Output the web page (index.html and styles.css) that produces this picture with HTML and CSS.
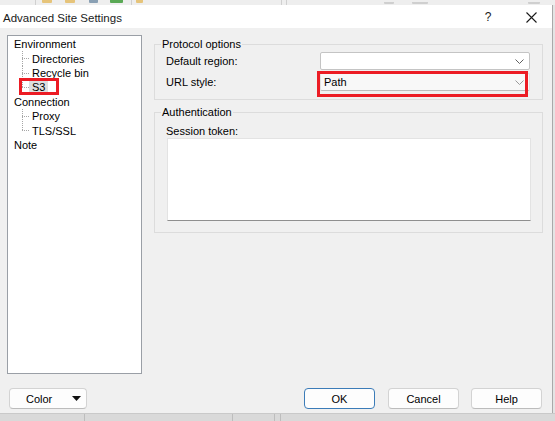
FILE: index.html
```html
<!DOCTYPE html>
<html>
<head>
<meta charset="utf-8">
<link rel="stylesheet" href="styles.css">
</head>
<body>
<div class="screen">
  <div class="app-toolbar">
    <span class="tb-sep s1"></span>
    <span class="tb-icon folder i1"></span>
    <span class="tb-icon folder i2"></span>
    <span class="tb-icon arrow i3"></span>
    <span class="tb-icon green i4"></span>
    <span class="tb-sep s2"></span>
    <span class="tb-icon folder i5"></span>
    <span class="tb-sep s3"></span>
    <span class="tb-sep s4"></span>
    <span class="tb-icon grey i6"></span>
    <span class="tb-icon grey i7"></span>
    <span class="tb-icon grey i8"></span>
  </div>
  <div class="main-row">
    <div class="dialog">
      <div class="titlebar">
        <span class="title">Advanced Site Settings</span>
        <span class="help-btn">?</span>
        <span class="close-btn">
          <svg width="11" height="11" viewBox="0 0 11 11"><path d="M0.5 0.5 L10.5 10.5 M10.5 0.5 L0.5 10.5" stroke="#1a1a1a" stroke-width="1.1" fill="none"/></svg>
        </span>
      </div>
      <div class="content">
        <div class="tree">
          <div class="node top">Environment</div>
          <div class="node child"><span class="conn"></span><span class="label">Directories</span></div>
          <div class="node child"><span class="conn"></span><span class="label">Recycle bin</span></div>
          <div class="node child last marked"><span class="conn"></span><span class="label selected">S3</span><span class="mark tree-mark"></span></div>
          <div class="node top">Connection</div>
          <div class="node child"><span class="conn"></span><span class="label">Proxy</span></div>
          <div class="node child last"><span class="conn"></span><span class="label">TLS/SSL</span></div>
          <div class="node top">Note</div>
        </div>
        <div class="panel">
          <fieldset class="group proto">
            <legend>Protocol options</legend>
            <div class="form-row first">
              <span class="field-label">Default region:</span>
              <div class="combo editable">
                <span class="combo-text"></span>
                <svg class="chev" width="9" height="5" viewBox="0 0 9 5"><path d="M0.5 0.5 L4.5 4.5 L8.5 0.5" stroke="#606060" stroke-width="1" fill="none"/></svg>
              </div>
            </div>
            <div class="form-row">
              <span class="field-label">URL style:</span>
              <div class="combo list">
                <span class="combo-text">Path</span>
                <svg class="chev" width="9" height="5" viewBox="0 0 9 5"><path d="M0.5 0.5 L4.5 4.5 L8.5 0.5" stroke="#9a9a9a" stroke-width="1" fill="none"/></svg>
                <span class="mark combo-mark"></span>
              </div>
            </div>
          </fieldset>
          <fieldset class="group auth">
            <legend>Authentication</legend>
            <div class="block-label">Session token:</div>
            <div class="textbox"></div>
          </fieldset>
        </div>
      </div>
      <div class="footer">
        <button class="btn color-btn"><span>Color</span><svg class="tri" width="9" height="5" viewBox="0 0 9 5"><path d="M0 0 L9 0 L4.5 5 Z" fill="#111"/></svg></button>
        <span class="spacer"></span>
        <button class="btn default ok">OK</button>
        <button class="btn cancel">Cancel</button>
        <button class="btn help">Help</button>
      </div>
    </div>
    <div class="app-side"></div>
  </div>
  <div class="app-bottom">
    <span class="bl b1"></span>
    <span class="bl b2"></span>
    <span class="bl b3"></span>
    <span class="bl b4"></span>
  </div>
</div>
</body>
</html>
```

FILE: styles.css
```css
* { box-sizing: border-box; }
html, body {
  margin: 0;
  padding: 0;
  width: 555px;
  height: 421px;
  overflow: hidden;
  background: #e6e6e6;
  font-family: "Liberation Sans", Arial, sans-serif;
  font-size: 11px;
  color: #000;
}
.screen {
  width: 555px;
  height: 421px;
  display: flex;
  flex-direction: column;
}

/* background application toolbar strip */
.app-toolbar {
  height: 5px;
  flex: none;
  display: flex;
  align-items: flex-start;
  background: #eeeeee;
}
.tb-sep { width: 1px; height: 5px; background: #d0d0d0; flex: none; }
.tb-icon { height: 3px; flex: none; border-radius: 0 0 1px 1px; }
.folder { background: #e6c47a; width: 10px; }
.arrow { background: #8aa0b4; width: 9px; }
.green { background: #5aa955; width: 13px; }
.grey { background: #cfcfcf; width: 10px; height: 2px; margin-top: 2px; }
.s1 { margin-left: 35px; }
.i1 { margin-left: 6px; }
.i2 { margin-left: 13px; }
.i3 { margin-left: 14px; }
.i4 { margin-left: 12px; }
.s2 { margin-left: 8px; }
.i5 { margin-left: 4px; width: 7px; }
.s3 { margin-left: 138px; }
.s4 { margin-left: 4px; }
.i6 { margin-left: 97px; }
.i7 { margin-left: 18px; width: 16px; }
.i8 { margin-left: 100px; width: 12px; }

.main-row {
  height: 408px;
  flex: none;
  display: flex;
}
.dialog {
  width: 553px;
  height: 408px;
  flex: none;
  background: #f0f0f0;
  border-right: 1px solid #a9a9a9;
  display: flex;
  flex-direction: column;
}
.app-side { flex: 1; background: #e4e4e4; }

/* title bar */
.titlebar {
  height: 23px;
  flex: none;
  background: #ffffff;
  display: flex;
  align-items: center;
  padding: 0 10px 0 3px;
}
.title {
  flex: 1;
  font-size: 11.5px;
  color: #1a1a1a;
  padding-top: 2px;
}
.help-btn {
  width: 16px;
  text-align: center;
  font-size: 12px;
  margin-right: 24px;
  color: #1a1a1a;
  padding-top: 1px;
}
.close-btn {
  width: 22px;
  display: flex;
  justify-content: center;
  align-items: center;
  padding-top: 1px;
}

/* content */
.content {
  flex: none;
  height: 346px;
  display: flex;
  padding: 7px 10px 0 7px;
}
.tree {
  width: 135px;
  height: 339px;
  flex: none;
  background: #ffffff;
  border: 1px solid #9a9fa6;
  padding-top: 1px;
}
.node {
  height: 14.4px;
  line-height: 14.4px;
  white-space: nowrap;
}
.node.top { padding-left: 6px; }
.node.child {
  display: flex;
  align-items: center;
  padding-left: 14px;
  position: relative;
}
.conn {
  align-self: stretch;
  width: 7px;
  flex: none;
  background-image:
    repeating-linear-gradient(to bottom, #a6a6a6 0 1px, transparent 1px 2px),
    repeating-linear-gradient(to right, #a6a6a6 0 1px, transparent 1px 2px);
  background-size: 1px 100%, 100% 1px;
  background-position: 0 0, 0 7px;
  background-repeat: no-repeat;
}
.node.last .conn { background-size: 1px 7px, 100% 1px; }
.label {
  display: inline-block;
  line-height: 12px;
  padding: 0 3px;
}
.label.selected { background: #dedede; }

.mark {
  position: absolute;
  border: 3px solid #ec1c24;
  pointer-events: none;
}
.tree-mark {
  left: 11px;
  top: -2px;
  width: 40px;
  height: 17px;
}

/* right panel */
.panel {
  flex: 1;
  margin-left: 12px;
  padding-top: 2px;
  display: flex;
  flex-direction: column;
}
.group {
  margin: 0;
  border: 1px solid #dcdcdc;
  min-inline-size: 0;
}
.group legend {
  padding: 0 1px;
  margin-left: -5px;
  line-height: 14px;
  font-size: 11px;
  color: #000;
}
.proto { padding: 1px 11px 8px; }
.auth { padding: 5px 11px 11px; margin-top: 5px; }

.form-row {
  display: grid;
  grid-template-columns: 154px 210px;
  align-items: center;
  margin-top: 3px;
}
.form-row.first { margin-top: 0; }
.field-label { line-height: 14px; }
.combo {
  height: 18px;
  display: flex;
  align-items: center;
  padding: 0 5px 0 3px;
  position: relative;
}
.combo.editable {
  background: #ffffff;
  border: 1px solid #c4c4c4;
  border-radius: 2px;
}
.combo.list {
  background: #f8f8f8;
  border: 1px solid #e2e2e2;
  border-bottom-color: #bdbdbd;
  border-radius: 2px;
}
.combo-text { flex: 1; }
.chev { flex: none; }
.combo-mark {
  left: -4px;
  top: -3px;
  width: 211px;
  height: 26px;
}

.block-label { line-height: 14px; }
.textbox {
  margin-left: 1px;
  width: 364px;
  height: 83px;
  background: #ffffff;
  border: 1px solid #e3e3e3;
  border-bottom: 1px solid #8f8f8f;
}

/* footer */
.footer {
  flex: none;
  height: 39px;
  display: flex;
  align-items: flex-start;
  padding: 14px 10px 0 9px;
}
.spacer { flex: 1; }
.btn {
  height: 21px;
  width: 71px;
  font-family: "Liberation Sans", Arial, sans-serif;
  font-size: 11px;
  color: #000;
  background: #fdfdfd;
  border: 1px solid #d3d3d3;
  border-bottom-color: #bcbcbc;
  border-radius: 4px;
  padding: 0;
  margin: 0;
}
.btn.default { border-color: #3c7cb8; }
.ok { margin-right: 13px; }
.cancel { margin-right: 12px; }
.color-btn {
  width: 78px;
  display: flex;
  align-items: center;
  padding: 0 5px 0 16px;
}
.color-btn span { flex: 1; text-align: left; }
.tri { flex: none; }

/* background app bottom strip */
.app-bottom {
  flex: 1;
  background: #d9d9d9;
  display: flex;
  border-top: 1px solid #c9c9c9;
}
.bl { width: 1px; background: #bdbdbd; flex: none; }
.b1 { margin-left: 84px; }
.b2 { margin-left: 147px; }
.b3 { margin-left: 41px; }
.b4 { margin-left: 5px; }
```
